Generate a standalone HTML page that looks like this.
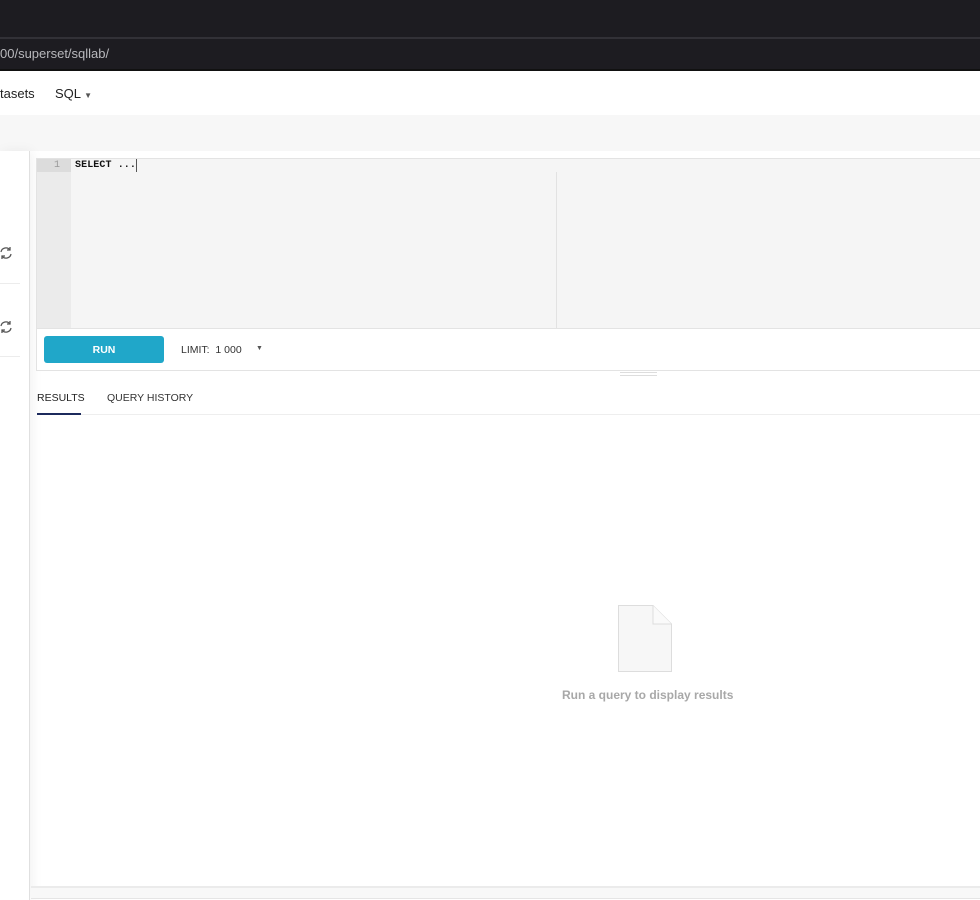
<!DOCTYPE html>
<html><head><meta charset="utf-8"><style>
*{margin:0;padding:0;box-sizing:border-box}
body{width:980px;height:900px;overflow:hidden;background:#fff;font-family:"Liberation Sans",sans-serif;position:relative}
.a{position:absolute}
</style></head><body>
<div class="a" style="left:0;top:0;width:980px;height:37px;background:#1d1c21"></div>
<div class="a" style="left:0;top:37px;width:980px;height:2px;background:#323137"></div>
<div class="a" style="left:0;top:39px;width:980px;height:31px;background:#1d1c21"></div>
<div class="a" style="left:0;top:46px;font-size:13px;color:#b8b8bc">00/superset/sqllab/</div>
<div class="a" style="left:0;top:69px;width:980px;height:2px;background:#111"></div>
<div class="a" style="left:0;top:86px;font-size:13px;color:#222">tasets</div>
<div class="a" style="left:55px;top:86px;font-size:13px;color:#222">SQL <span style="font-size:8px;color:#555">▼</span></div>
<div class="a" style="left:0;top:115px;width:980px;height:36px;background:#f7f7f7"></div>
<div class="a" style="left:0;top:151px;width:30px;height:749px;background:#fff;border-right:1px solid #e0e0e0;box-shadow:2px 0 12px rgba(0,0,0,.06)"></div>
<div class="a" style="left:0;top:283px;width:20px;height:1px;background:#ececec"></div>
<div class="a" style="left:0;top:356px;width:20px;height:1px;background:#ececec"></div>
<svg class="a" style="left:-2px;top:246px" width="16" height="14" viewBox="0 0 16 14" fill="none" stroke="#555" stroke-width="1.3"><path d="M3 6a5 5 0 0 1 9-2M13 8a5 5 0 0 1-9 2"/><path d="M12 1v3h-3M4 13v-3h3"/></svg>
<svg class="a" style="left:-2px;top:320px" width="16" height="14" viewBox="0 0 16 14" fill="none" stroke="#555" stroke-width="1.3"><path d="M3 6a5 5 0 0 1 9-2M13 8a5 5 0 0 1-9 2"/><path d="M12 1v3h-3M4 13v-3h3"/></svg>
<div class="a" style="left:36px;top:158px;width:950px;height:213px;border:1px solid #e3e3e3;background:#fff"></div>
<div class="a" style="left:37px;top:159px;width:950px;height:170px;background:#f5f5f5"></div>
<div class="a" style="left:37px;top:159px;width:34px;height:170px;background:#ebebeb"></div>
<div class="a" style="left:37px;top:159px;width:34px;height:13px;background:#dcdcdc"></div>
<div class="a" style="left:54px;top:160px;font-family:'Liberation Mono',monospace;font-size:10px;line-height:12px;color:#999">1</div>
<div class="a" style="left:75px;top:160px;font-family:'Liberation Mono',monospace;font-size:10px;line-height:12px;font-weight:bold;color:#111;letter-spacing:.1px">SELECT ...</div>
<div class="a" style="left:136px;top:159px;width:1px;height:13px;background:#555"></div>
<div class="a" style="left:556px;top:172px;width:1px;height:157px;background:#e2e2e2"></div>
<div class="a" style="left:37px;top:328px;width:950px;height:1px;background:#e3e3e3"></div>
<div class="a" style="left:44px;top:336px;width:120px;height:27px;background:#20a7c9;border-radius:3px;color:#fff;font-size:10.5px;font-weight:bold;text-align:center;line-height:28px">RUN</div>
<div class="a" style="left:181px;top:344px;font-size:10.5px;color:#333">LIMIT:&nbsp; 1 000</div>
<div class="a" style="left:256px;top:345px;font-size:7px;color:#555">▼</div>
<div class="a" style="left:620px;top:372px;width:37px;height:1px;background:#ddd"></div>
<div class="a" style="left:620px;top:375px;width:37px;height:1px;background:#ddd"></div>
<div class="a" style="left:37px;top:392px;font-size:10.5px;color:#222">RESULTS</div>
<div class="a" style="left:107px;top:392px;font-size:10.5px;color:#333">QUERY HISTORY</div>
<div class="a" style="left:37px;top:414px;width:950px;height:1px;background:#eee"></div>
<div class="a" style="left:37px;top:413px;width:44px;height:2px;background:#1c2a5c"></div>
<svg class="a" style="left:617px;top:604px" width="56" height="69" viewBox="0 0 56 69"><path d="M1.5 1.5H36L54.5 20V67.5H1.5Z" fill="#f7f7f7" stroke="#ddd"/><path d="M36 1.5V20H54.5" fill="#fafafa" stroke="#ddd"/></svg>
<div class="a" style="left:562px;top:688px;font-size:12px;font-weight:bold;color:#a8a8a8">Run a query to display results</div>
<div class="a" style="left:31px;top:886px;width:949px;height:2px;background:#ebebeb"></div>
<div class="a" style="left:31px;top:888px;width:949px;height:11px;background:#f8f8f8;border-bottom:1px solid #e5e5e5"></div>
</body></html>
